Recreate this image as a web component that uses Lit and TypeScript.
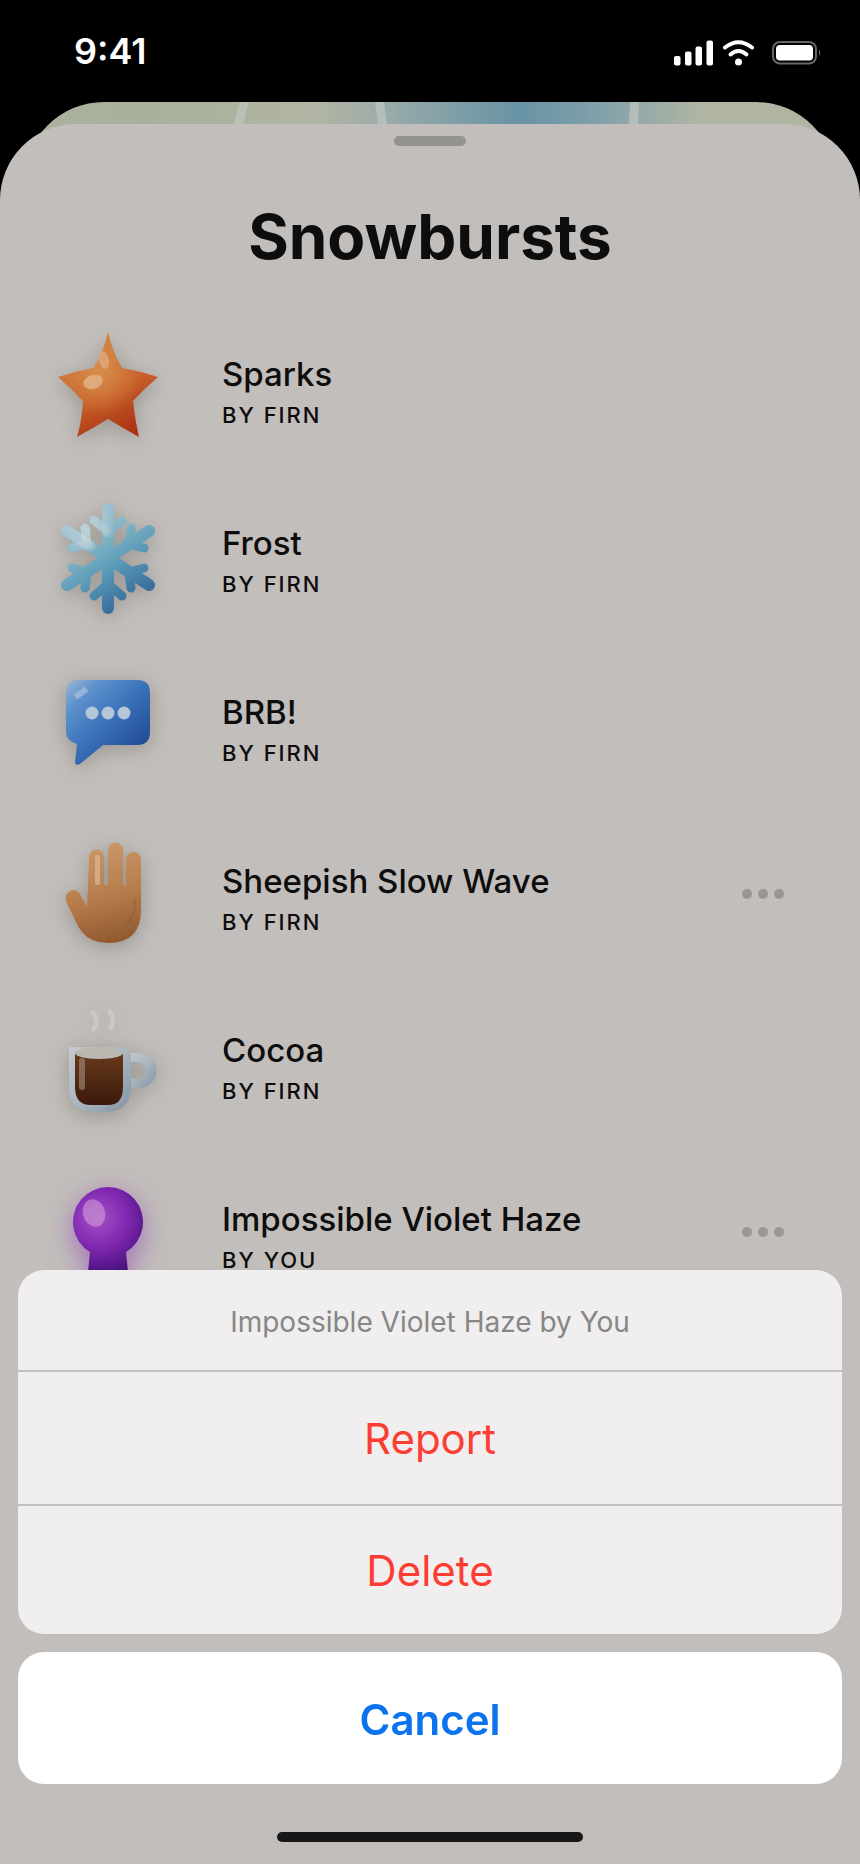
import { LitElement, html, css, svg, nothing } from "lit";
import { customElement, state } from "lit/decorators.js";

interface Burst {
  icon: string;
  name: string;
  author: string;
  menu?: boolean;
}

const BURSTS: Burst[] = [
  { icon: "star", name: "Sparks", author: "Firn" },
  { icon: "frost", name: "Frost", author: "Firn" },
  { icon: "bubble", name: "BRB!", author: "Firn" },
  { icon: "hand", name: "Sheepish Slow Wave", author: "Firn", menu: true },
  { icon: "cocoa", name: "Cocoa", author: "Firn" },
  { icon: "violet", name: "Impossible Violet Haze", author: "You", menu: true },
];

const STAR =
  "M60 5Q65 26 74 41Q92 44 110 50Q96 62 85 74Q87 93 91 110Q75 101 60 92Q45 101 29 110Q34 93 35 74Q24 62 10 50Q28 44 46 41Q55 26 60 5Z";

const ART: Record<string, unknown> = {
  star: svg`
    <defs>
      <linearGradient id="starFill" x1="0.35" y1="0.1" x2="0.7" y2="1">
        <stop offset="0" stop-color="#cf8240" />
        <stop offset="0.5" stop-color="#c8602a" />
        <stop offset="1" stop-color="#a82f10" />
      </linearGradient>
      <radialGradient id="starGlow" cx="0.42" cy="0.4" r="0.4">
        <stop offset="0" stop-color="#dc9a55" stop-opacity="0.7" />
        <stop offset="1" stop-color="#dc9a55" stop-opacity="0" />
      </radialGradient>
    </defs>
    <path fill="url(#starFill)" d=${STAR} />
    <path fill="url(#starGlow)" d=${STAR} />
    <ellipse cx="56" cy="33" rx="5" ry="9" transform="rotate(-14 56 33)" fill="#e3b489" opacity="0.6" />
    <ellipse cx="45" cy="55" rx="10" ry="7" transform="rotate(-16 45 55)" fill="#e3b489" opacity="0.8" />`,
  frost: svg`
    <defs>
      <linearGradient id="frostFill" gradientUnits="userSpaceOnUse" x1="28" y1="18" x2="84" y2="108">
        <stop offset="0" stop-color="#a9c8d2" />
        <stop offset="0.35" stop-color="#7fb2c4" />
        <stop offset="0.6" stop-color="#5b9bb8" />
        <stop offset="1" stop-color="#35699a" />
      </linearGradient>
      <radialGradient id="frostLight" gradientUnits="userSpaceOnUse" cx="40" cy="34" r="30">
        <stop offset="0" stop-color="#d2dcde" stop-opacity="0.7" />
        <stop offset="1" stop-color="#d2dcde" stop-opacity="0" />
      </radialGradient>
    </defs>
    <g fill="none" stroke="url(#frostFill)" stroke-linecap="round" stroke-linejoin="round">
      <path stroke-width="12" d="M60 13V112M19 35L101 89M101 35L19 89" />
      <path stroke-width="9" d="M46 24L60 35L74 25M46 100L60 88L74 100M83 32L81 48L96 52M37 32L39 48L24 52M83 92L81 76L96 72M37 92L39 76L24 72" />
    </g>
    <g fill="none" stroke="url(#frostLight)" stroke-linecap="round" stroke-linejoin="round">
      <path stroke-width="9" d="M46 24L58 34M37 32L39 48L24 52" />
      <path stroke-width="11" d="M19 35L42 50M60 13V36" />
    </g>`,
  bubble: svg`
    <defs>
      <linearGradient id="bubbleFill" gradientUnits="userSpaceOnUse" x1="22" y1="16" x2="90" y2="88">
        <stop offset="0" stop-color="#94b1d2" />
        <stop offset="0.2" stop-color="#5d92cc" />
        <stop offset="0.55" stop-color="#3a72ba" />
        <stop offset="1" stop-color="#214a96" />
      </linearGradient>
    </defs>
    <path fill="url(#bubbleFill)" d="M31 15H89Q102 15 102 28V67Q102 80 89 80H55L32 99Q27 101 27 97L29 79Q18 76 18 66V28Q18 15 31 15Z" />
    <g fill="#b7c5d8">
      <circle cx="44" cy="48" r="6.500" /><circle cx="60" cy="48" r="6.500" /><circle cx="76" cy="48" r="6.500" />
    </g>
    <rect x="26" y="25" width="14" height="6" rx="1" transform="rotate(-36 33 28)" fill="#c3d0df" opacity="0.5" />`,
  hand: svg`
    <defs>
      <linearGradient id="handFill" gradientUnits="userSpaceOnUse" x1="48" y1="8" x2="74" y2="112">
        <stop offset="0" stop-color="#cb9868" />
        <stop offset="0.5" stop-color="#b87d4d" />
        <stop offset="1" stop-color="#8c552c" />
      </linearGradient>
    </defs>
    <path fill="url(#handFill)" d="M41 23A7.500 7.500 0 0 1 56 23V51H60V16A7.500 7.500 0 0 1 75 16V51H78V25.500A7.500 7.500 0 0 1 93 25.500V76Q93 109 60 109Q43 109 34 98Q30 93 27 86L18.500 68Q16 60 22 57Q28 54 32 60L39 73L40 52Z" />
    <rect x="47" y="21" width="5" height="30" rx="2" fill="#dfbd9c" opacity="0.65" />
    <path d="M87 65Q88 82 77 93" fill="none" stroke="#8a532b" stroke-width="1.500" opacity="0.4" />`,
  cocoa: svg`
    <defs>
      <linearGradient id="mugFill" x1="0" y1="0" x2="1" y2="1">
        <stop offset="0" stop-color="#c6c9ca" />
        <stop offset="0.5" stop-color="#aab6bf" />
        <stop offset="1" stop-color="#8193a3" />
      </linearGradient>
      <linearGradient id="cocoaFill" x1="0" y1="0" x2="0" y2="1">
        <stop offset="0" stop-color="#693a1d" />
        <stop offset="1" stop-color="#3b190b" />
      </linearGradient>
    </defs>
    <path fill="url(#mugFill)" fill-rule="evenodd" d="M80 50H91A17.500 17.500 0 0 1 91 85H78ZM83 59V75L84 76H89A8.500 8.500 0 0 0 89 59Z" />
    <path fill="url(#mugFill)" d="M21 44H74Q83 44 83 53V83Q83 109 57 109H46Q21 109 21 84Z" />
    <path fill="url(#cocoaFill)" d="M27 50H75V84Q75 102 60 102H43Q27 102 27 84Z" />
    <ellipse cx="51" cy="50" rx="24" ry="6" fill="#bbb8b2" />
    <rect x="31" y="55" width="6" height="32" rx="3" fill="#a78f80" opacity="0.6" />
    <path d="M45 10Q51 18 46 26M62 9Q67 17 63 25" fill="none" stroke="#d4d2cf" stroke-width="5" stroke-linecap="round" opacity="0.6" />`,
  violet: svg`
    <defs>
      <radialGradient id="violetFill" gradientUnits="userSpaceOnUse" cx="50" cy="46" r="56">
        <stop offset="0" stop-color="#a552c4" />
        <stop offset="0.5" stop-color="#8229b2" />
        <stop offset="1" stop-color="#4a127e" />
      </radialGradient>
    </defs>
    <path fill="url(#violetFill)" d="M42 80A35 35 0 1 1 78 80L82 120H38Z" />
    <ellipse cx="46" cy="41" rx="11" ry="14" transform="rotate(-18 46 41)" fill="#cf9fd8" opacity="0.6" />`,
};

@customElement("app-root")
export class AppRoot extends LitElement {
  @state() private selected: Burst | null = BURSTS[5];

  static styles = css`
    :host {
      display: block;
      font-family: Inter, "Liberation Sans", sans-serif;
      color: #0d0d0d;
    }
    * { box-sizing: border-box; }
    button {
      font: inherit;
      border: 0;
      margin: 0;
      padding: 0;
      background: none;
      cursor: pointer;
    }
    .screen {
      display: flex;
      flex-direction: column;
      height: 100vh;
      overflow: hidden;
      background: #000;
    }
    .status {
      flex: none;
      display: flex;
      justify-content: space-between;
      align-items: center;
      height: 102px;
      padding: 0 38px 0 74px;
      color: #fff;
    }
    .time { font-size: 36px; font-weight: 600; line-height: 44px; }
    .indicators { display: block; width: 150px; height: 32px; margin-top: 4px; }
    .map {
      flex: none;
      height: 98px;
      margin: 0 24px -76px;
      border-radius: 80px 80px 0 0;
      overflow: hidden;
      background: linear-gradient(90deg, #abb3a0 0%, #a8b09a 15%, #b1b5a3 36%, #9cabaa 44%, #7f9fa6 53%, #6893a6 61%, #7f9fa9 70%, #98aaa8 77%, #b0b5a2 83%, #b0b5a2 100%);
    }
    .roads { display: block; width: 100%; height: 24px; }
    .sheet {
      flex: 1;
      position: relative;
      min-height: 0;
      padding-top: 12px;
      border-radius: 76px 76px 0 0;
      background: #c2bebb;
    }
    .grabber {
      width: 72px;
      height: 10px;
      margin: 0 auto;
      border-radius: 5px;
      background: #959390;
    }
    h1 {
      margin: 50px 0 24px;
      font-size: 62px;
      font-weight: 700;
      line-height: 82px;
      text-align: center;
    }
    ul { list-style: none; margin: 0; padding: 0 68px 0 48px; }
    .row { display: flex; align-items: center; height: 169px; }
    .art {
      flex: none;
      width: 120px;
      height: 120px;
      overflow: visible;
      margin-right: 54px;
      filter: drop-shadow(0 4px 10px rgba(50, 45, 35, 0.28));
    }
    .art.violet { filter: drop-shadow(0 8px 14px rgba(140, 60, 180, 0.6)); }
    .label { flex: 1; padding-top: 10px; }
    .name { font-size: 33px; font-weight: 500; line-height: 44px; }
    .author {
      margin-top: 3px;
      font-size: 22px;
      font-weight: 450;
      line-height: 32px;
      letter-spacing: 2px;
      text-transform: uppercase;
    }
    .more { display: flex; gap: 6px; padding: 16px 8px; }
    .more i { width: 10px; height: 10px; border-radius: 50%; background: #999795; }
    .actions {
      position: fixed;
      left: 0;
      right: 0;
      bottom: 0;
      padding: 0 18px 22px;
    }
    .group { border-radius: 26px; background: #f0eeee; overflow: hidden; }
    .caption {
      margin: 0;
      padding: 32px 16px 28px;
      font-size: 28px;
      line-height: 40px;
      font-weight: 400;
      color: #868686;
      text-align: center;
    }
    .action {
      display: block;
      width: 100%;
      height: 132px;
      font-size: 42px;
      font-weight: 400;
      color: #fc3d32;
    }
    .group .action { border-top: 2px solid #c2c1c1; }
    .group .report { height: 134px; }
    .group .delete { height: 130px; }
    .cancel {
      margin-top: 18px;
      padding-top: 2px;
      border-radius: 26px;
      background: #fff;
      color: #0b73ee;
      font-weight: 600;
    }
    .home {
      width: 306px;
      height: 10px;
      margin: 48px auto 0;
      border-radius: 5px;
      background: #171717;
    }
  `;

  private renderRow(b: Burst) {
    return html`<li class="row">
      <svg class="art ${b.icon}" viewBox="0 0 120 120" aria-hidden="true">${ART[b.icon]}</svg>
      <div class="label">
        <div class="name">${b.name}</div>
        <div class="author">By ${b.author}</div>
      </div>
      ${b.menu
        ? html`<button class="more" aria-label="Options for ${b.name}" @click=${() => (this.selected = b)}>
            <i></i><i></i><i></i>
          </button>`
        : nothing}
    </li>`;
  }

  private close = () => {
    this.selected = null;
  };

  render() {
    const s = this.selected;
    return html`
      <div class="screen">
        <header class="status">
          <span class="time">9:41</span>
          <svg class="indicators" viewBox="0 0 150 32" aria-hidden="true">
            <g fill="#fff">
              <rect x="2" y="19" width="6.500" height="9.500" rx="2" />
              <rect x="13" y="14.500" width="6.500" height="14" rx="2" />
              <rect x="23.500" y="9.500" width="6.500" height="19" rx="2" />
              <rect x="34.500" y="3.500" width="6.500" height="25" rx="2" />
              <circle cx="66.500" cy="25" r="3.500" />
              <rect x="104" y="8" width="37" height="15.500" rx="4" />
            </g>
            <g fill="none" stroke="#fff" stroke-width="4" stroke-linecap="round">
              <path d="M53 10.500Q66.500 0 80 10.500" />
              <path d="M58.500 17.500Q66.500 10.500 74.500 17.500" />
            </g>
            <rect x="101" y="5" width="43" height="21.500" rx="7" fill="none" stroke="#666" stroke-width="2" />
            <path d="M147 12.500Q149.500 15.500 147 19Z" fill="#666" />
          </svg>
        </header>
        <div class="map">
          <svg class="roads" viewBox="0 0 812 24" preserveAspectRatio="none" aria-hidden="true">
            <path d="M221 -4L213 28M355 -4L359 28M611 -4L609 28" stroke="#bfc5be" stroke-width="9" opacity="0.75" />
          </svg>
        </div>
        <main class="sheet">
          <div class="grabber"></div>
          <h1>Snowbursts</h1>
          <ul>${BURSTS.map((b) => this.renderRow(b))}</ul>
        </main>
      </div>
      <div class="actions">
        ${s
          ? html`<div class="group" role="dialog" aria-label="Burst options">
                <p class="caption">${s.name} by ${s.author}</p>
                <button class="action report" @click=${this.close}>Report</button>
                <button class="action delete" @click=${this.close}>Delete</button>
              </div>
              <button class="action cancel" @click=${this.close}>Cancel</button>`
          : nothing}
        <div class="home"></div>
      </div>
    `;
  }
}
